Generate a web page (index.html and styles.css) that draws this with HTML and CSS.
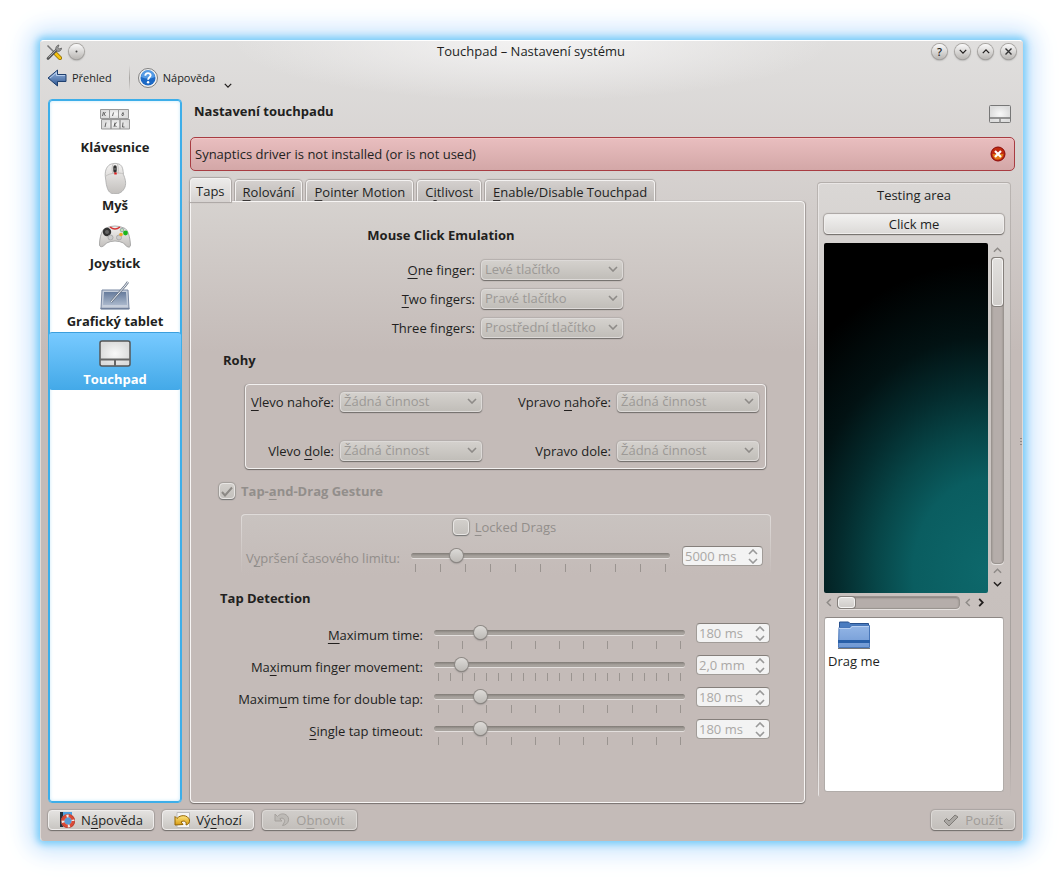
FILE: index.html
```html
<!DOCTYPE html>
<html lang="cs">
<head>
<meta charset="utf-8">
<title>Touchpad – Nastavení systému</title>
<link rel="stylesheet" href="styles.css">
</head>
<body>
<svg class="defs" width="0" height="0" aria-hidden="true">
  <defs>
    <linearGradient id="metal" x1="0" y1="0" x2="0" y2="1"><stop offset="0" stop-color="#f4f3f2"/><stop offset="1" stop-color="#c2bfbc"/></linearGradient>
    <linearGradient id="blue" x1="0" y1="0" x2="0" y2="1"><stop offset="0" stop-color="#9dbbe4"/><stop offset="1" stop-color="#2c548f"/></linearGradient>
    <linearGradient id="folder" x1="0" y1="0" x2="0" y2="1"><stop offset="0" stop-color="#94b6e6"/><stop offset="1" stop-color="#7099d4"/></linearGradient>
    <linearGradient id="slate" x1="0" y1="0" x2="0" y2="1"><stop offset="0" stop-color="#667b9c"/><stop offset="1" stop-color="#a9b7cb"/></linearGradient>
    <linearGradient id="gold" x1="0" y1="0" x2="0" y2="1"><stop offset="0" stop-color="#ffe680"/><stop offset="1" stop-color="#d79a10"/></linearGradient>
    <radialGradient id="pad"><stop offset="0" stop-color="#f8f8f8"/><stop offset="1" stop-color="#dcdcdc"/></radialGradient>
    <symbol id="touchpad" viewBox="0 0 32 28">
      <rect x="1" y="1" width="30" height="25" rx="2" fill="url(#pad)" stroke="#555" stroke-width="1.5"/>
      <path d="M1 19.500h30" stroke="#666" stroke-width="2"/><path d="M16 20v6" stroke="#666" stroke-width="2"/>
    </symbol>
    <symbol id="down" viewBox="0 0 10 6"><path d="M1 1l4 4 4-4" fill="none" stroke="currentColor" stroke-width="1.600"/></symbol>
    <symbol id="up" viewBox="0 0 10 6"><path d="M1 5l4-4 4 4" fill="none" stroke="currentColor" stroke-width="1.600"/></symbol>
    <symbol id="left" viewBox="0 0 6 10"><path d="M5 1L1 5l4 4" fill="none" stroke="currentColor" stroke-width="1.600"/></symbol>
    <symbol id="right" viewBox="0 0 6 10"><path d="M1 1l4 4-4 4" fill="none" stroke="currentColor" stroke-width="2"/></symbol>
  </defs>
</svg>
<div class="window">
  <header class="titlebar">
    <div class="title-side">
      <svg width="16" height="16" viewBox="0 0 16 16"><path d="M1.500 1.500l7 7" stroke="#777" stroke-width="1.500"/><path d="M9 9l5 5" stroke="#8a6a00" stroke-width="4" stroke-linecap="round"/><path d="M9 9l5 5" stroke="#f5c211" stroke-width="2.600" stroke-linecap="round"/><path d="M2 14.500L11 5.500" stroke="#555" stroke-width="2.600" stroke-linecap="round"/><path d="M2.500 13.500L10.500 5.500" stroke="#aaa" stroke-width="1"/><path d="M10 6.500c-1-3 1-5.500 3-5.500l-1 2.500 1.500 1.500 2-1c0 3-3 4.500-5.500 2.500z" fill="#999" stroke="#555" stroke-width=".700"/></svg>
      <button class="round" type="button" aria-label="Nabídka okna"><svg width="15" height="15" viewBox="0 0 15 15"><circle cx="7.500" cy="7.500" r="1" fill="#444"/></svg></button>
    </div>
    <h1 class="title">Touchpad – Nastavení systému</h1>
    <div class="title-side title-end">
      <button class="round" type="button">?</button>
      <button class="round" type="button" aria-label="Minimalizovat"><svg width="8" height="5"><use href="#down"/></svg></button>
      <button class="round" type="button" aria-label="Maximalizovat"><svg width="8" height="5"><use href="#up"/></svg></button>
      <button class="round" type="button" aria-label="Zavřít"><svg width="7" height="7" viewBox="0 0 7 7"><path d="M.5.5l6 6M6.500.5l-6 6" stroke="#333" stroke-width="1.400"/></svg></button>
    </div>
  </header>
  <nav class="toolbar">
    <button class="tool" type="button"><svg width="20" height="18" viewBox="0 0 20 18"><path d="M1 9l9.500-8v4.500H19v7h-8.500V17z" fill="url(#blue)" stroke="#20406f"/><path d="M3 9l6.500-5.500v3H18" fill="none" stroke="#c4d8f2" stroke-width=".8"/></svg>Přehled</button>
    <span class="separator"></span>
    <button class="tool" type="button"><svg width="20" height="20" viewBox="0 0 20 20"><circle cx="10" cy="10" r="9.500" fill="#f0f0f0" stroke="#666" stroke-width=".8"/><circle cx="10" cy="10" r="7.500" fill="#1c69c5"/><path d="M3 9a7 7 0 0114 0q-7 3-14 0" fill="#559be4"/><path d="M7.300 7.800c0-3.600 5.400-3.300 5.400-.5 0 1.900-2.600 2-2.600 4.400" fill="none" stroke="#fff" stroke-width="1.800"/><circle cx="10.100" cy="14.200" r="1.200" fill="#fff"/></svg>Nápověda<svg class="drop" width="8" height="5"><use href="#down"/></svg></button>
  </nav>
  <div class="body">
    <nav class="modules">
      <a class="module" href="#k"><svg width="32" height="32" viewBox="0 0 32 32"><g fill="url(#pad)" stroke="#999"><path d="M1.500 5.500h9v9h-9zM10.500 5.500h9v9h-9zM19.500 5.500h10v9h-10z"/><path d="M2.500 15.500h9.500v9.500H2.500zM12 15.500h9v9.500h-9zM21 15.500h9.500v9.500H21z"/></g><path d="M4.500 8l-1 4m1.500-2l1.500 2M5 10l1.500-2M14.500 8.500l-1 3.500M24 8.500q-2 2-.5 3.500 2-1 .5-3.500M7 18.500L6 23M16 18.500L15 23m.5-2l2 2m-2-2l2-2.500M24 18.500L23.500 23h2" fill="none" stroke="#444" stroke-width=".8"/></svg>Klávesnice</a>
      <a class="module" href="#m"><svg width="32" height="32" viewBox="0 0 32 32"><path d="M11 2.500c3-1.500 7-1.500 10 0 3 2 3 6 3.500 10 1.500 4 3 8 1.500 12.500-2 5-6 7-10 7-5 0-7-3-8-7-1-3-1-6-1.500-9C5.500 10 7 5 11 2.500z" fill="url(#metal)" stroke="#aaa" stroke-width=".800"/><path d="M7 14c4-3 13-4 17.500-2M14 2c-1.500 4-1 7 0 10M18.500 2c1 4 1 7 .5 9.500" fill="none" stroke="#c4c2c0"/><path d="M16 5v4" stroke="#333" stroke-width="3.400" stroke-linecap="round"/><path d="M16 6v2" stroke="#888" stroke-width="1"/><path d="M16.500 10.500v2" stroke="#e02020" stroke-width="2.500"/></svg>Myš</a>
      <a class="module" href="#j"><svg width="32" height="32" viewBox="0 -1 32 32"><path d="M7 7q9-4 18 0c4 1 6 9 6.500 17-.5 4-4 2-7-2q-8.500-4-17 0c-3 4-6.500 5-7 2C.5 16 3 8 7 7z" fill="url(#metal)" stroke="#999" stroke-width=".800"/><path d="M11 6q5 4 10 0" fill="none" stroke="#d43535" stroke-width="1.600"/><circle cx="8" cy="11" r="4.200" fill="#333"/><circle cx="8" cy="11" r="2" fill="#666"/><circle cx="11.500" cy="16.500" r="2.500" fill="#ccc" stroke="#aaa"/><circle cx="20" cy="16.500" r="2.500" fill="#ccc" stroke="#aaa"/><circle cx="23" cy="9" r="1.800" fill="#bfe0b8" stroke="#9aa"/><circle cx="26.500" cy="12" r="2.400" fill="#1bb51b"/><circle cx="22" cy="13.500" r="1.800" fill="#f0a42a"/></svg>Joystick</a>
      <a class="module" href="#t"><svg width="32" height="32" viewBox="0 -2 32 32"><path d="M3 10h26l1 19H2z" fill="#c6cedb" stroke="#7888a3"/><path d="M5 12h22l1 13H4z" fill="url(#slate)"/><path d="M1.500 28.500h29" stroke="#71809b" stroke-width="1.500"/><path d="M12 22L26 6l3-4" fill="none" stroke="#6f7b8d" stroke-width="2.500"/><path d="M12 22L26 6l3-4" fill="none" stroke="#edf1f6"/></svg>Grafický tablet</a>
      <a class="module current" href="#p"><svg width="32" height="32" viewBox="0 -4 32 32"><use href="#touchpad" width="32" height="28"/></svg>Touchpad</a>
    </nav>
    <main class="content">
      <div class="page-head"><h2 class="heading">Nastavení touchpadu</h2><svg width="24" height="20" viewBox="0 0 24 20"><rect x="1.500" y="1.500" width="21" height="17" rx="1" fill="url(#pad)" stroke="#777"/><path d="M1 14h22" stroke="#777" stroke-width="1.500"/><path d="M12 14v5" stroke="#888" stroke-width="1.500"/></svg></div>
      <div class="message" role="alert"><span>Synaptics driver is not installed (or is not used)</span><button class="dismiss" type="button" aria-label="Zavřít zprávu"><svg width="16" height="16" viewBox="0 0 16 16"><circle cx="8" cy="8" r="7" fill="#c02a10" stroke="#8a0808"/><path d="M2.500 8h11q-1 5-5.500 5.500T2.500 8" fill="#e07a18"/><path d="M5 5l6 6M11 5l-6 6" stroke="#fff" stroke-width="2.200"/></svg></button></div>
      <div class="split">
        <section class="settings">
          <div class="tabs" role="tablist">
            <button class="tab active" role="tab" type="button" aria-selected="true">Taps</button>
            <button class="tab" role="tab" type="button"><u>R</u>olování</button>
            <button class="tab" role="tab" type="button"><u>P</u>ointer Motion</button>
            <button class="tab" role="tab" type="button">C<u>i</u>tlivost</button>
            <button class="tab" role="tab" type="button"><u>E</u>nable/Disable Touchpad</button>
          </div>
          <div class="panel" role="tabpanel">
            <h3 class="heading centered">Mouse Click Emulation</h3>
            <div class="fingers">
              <label for="f1"><u>O</u>ne finger:</label><span class="combo"><select id="f1" disabled><option>Levé tlačítko</option></select><svg width="10" height="6"><use href="#down"/></svg></span>
              <label for="f2"><u>T</u>wo fingers:</label><span class="combo"><select id="f2" disabled><option>Pravé tlačítko</option></select><svg width="10" height="6"><use href="#down"/></svg></span>
              <label for="f3">Three fingers:</label><span class="combo"><select id="f3" disabled><option>Prostřední tlačítko</option></select><svg width="10" height="6"><use href="#down"/></svg></span>
            </div>
            <h3 class="heading corners-title">Rohy</h3>
            <div class="corners">
              <label for="c1"><u>V</u>levo nahoře:</label><span class="combo"><select id="c1" disabled><option>Žádná činnost</option></select><svg width="10" height="6"><use href="#down"/></svg></span>
              <label for="c2">Vpravo <u>n</u>ahoře:</label><span class="combo"><select id="c2" disabled><option>Žádná činnost</option></select><svg width="10" height="6"><use href="#down"/></svg></span>
              <label for="c3">Vlevo <u>d</u>ole:</label><span class="combo"><select id="c3" disabled><option>Žádná činnost</option></select><svg width="10" height="6"><use href="#down"/></svg></span>
              <label for="c4">Vpravo dole:</label><span class="combo"><select id="c4" disabled><option>Žádná činnost</option></select><svg width="10" height="6"><use href="#down"/></svg></span>
            </div>
            <label class="check strong"><span class="tick"><input type="checkbox" checked disabled><svg width="12" height="11" viewBox="0 0 12 11"><path d="M1 6l3 3.500L11 1.500" fill="none" stroke="#8c8985" stroke-width="2"/></svg></span><span>Tap-<u>a</u>nd-Drag Gesture</span></label>
            <div class="drag">
              <label class="check"><span class="tick"><input type="checkbox" disabled></span><span><u>L</u>ocked Drags</span></label>
              <div class="drag-row">
                <label for="s0">V<u>y</u>pršení časového limitu:</label>
                <span class="slider"><input id="s0" type="range" value="16" disabled><span class="ticks"><i></i><i></i><i></i><i></i><i></i><i></i><i></i><i></i><i></i><i></i><i></i></span></span>
                <span class="spin"><input type="text" value="5000 ms" aria-label="Časový limit" disabled><span class="arrows"><button type="button" aria-label="Více" disabled><svg width="10" height="6"><use href="#up"/></svg></button><button type="button" aria-label="Méně" disabled><svg width="10" height="6"><use href="#down"/></svg></button></span></span>
              </div>
            </div>
            <h3 class="heading detection-title">Tap Detection</h3>
            <div class="detection">
              <label for="s1"><u>M</u>aximum time:</label>
              <span class="slider"><input id="s1" type="range" value="17" disabled><span class="ticks"><i></i><i></i><i></i><i></i><i></i><i></i><i></i><i></i><i></i><i></i><i></i></span></span>
              <span class="spin"><input type="text" value="180 ms" aria-label="Maximum time" disabled><span class="arrows"><button type="button" aria-label="Více" disabled><svg width="10" height="6"><use href="#up"/></svg></button><button type="button" aria-label="Méně" disabled><svg width="10" height="6"><use href="#down"/></svg></button></span></span>
              <label for="s2">Ma<u>x</u>imum finger movement:</label>
              <span class="slider"><input id="s2" type="range" value="9" disabled><span class="ticks"><i></i><i></i><i></i><i></i><i></i><i></i><i></i><i></i><i></i><i></i><i></i><i></i><i></i><i></i><i></i><i></i><i></i><i></i><i></i><i></i><i></i></span></span>
              <span class="spin"><input type="text" value="2,0 mm" aria-label="Maximum finger movement" disabled><span class="arrows"><button type="button" aria-label="Více" disabled><svg width="10" height="6"><use href="#up"/></svg></button><button type="button" aria-label="Méně" disabled><svg width="10" height="6"><use href="#down"/></svg></button></span></span>
              <label for="s3">Maxim<u>u</u>m time for double tap:</label>
              <span class="slider"><input id="s3" type="range" value="17" disabled><span class="ticks"><i></i><i></i><i></i><i></i><i></i><i></i><i></i><i></i><i></i><i></i><i></i></span></span>
              <span class="spin"><input type="text" value="180 ms" aria-label="Maximum time for double tap" disabled><span class="arrows"><button type="button" aria-label="Více" disabled><svg width="10" height="6"><use href="#up"/></svg></button><button type="button" aria-label="Méně" disabled><svg width="10" height="6"><use href="#down"/></svg></button></span></span>
              <label for="s4"><u>S</u>ingle tap timeout:</label>
              <span class="slider"><input id="s4" type="range" value="17" disabled><span class="ticks"><i></i><i></i><i></i><i></i><i></i><i></i><i></i><i></i><i></i><i></i><i></i></span></span>
              <span class="spin"><input type="text" value="180 ms" aria-label="Single tap timeout" disabled><span class="arrows"><button type="button" aria-label="Více" disabled><svg width="10" height="6"><use href="#up"/></svg></button><button type="button" aria-label="Méně" disabled><svg width="10" height="6"><use href="#down"/></svg></button></span></span>
            </div>
          </div>
        </section>
        <aside class="testing">
          <div class="testing-title">Testing area</div>
          <button class="button click" type="button">Click me</button>
          <div class="scroll">
            <div class="canvas"></div>
            <div class="vbar">
              <svg class="dim" width="9" height="6"><use href="#up"/></svg>
              <div class="groove"><div class="thumb"></div></div>
              <svg class="dim" width="9" height="6"><use href="#up"/></svg>
              <svg width="9" height="6"><use href="#down"/></svg>
            </div>
            <div class="hbar">
              <svg class="dim" width="6" height="9"><use href="#left"/></svg>
              <div class="groove"><div class="thumb"></div></div>
              <svg class="dim" width="6" height="9"><use href="#left"/></svg>
              <svg width="6" height="9"><use href="#right"/></svg>
            </div>
          </div>
          <div class="files">
            <div class="file"><svg width="32" height="28" viewBox="0 0 32 28"><path d="M1.500 1h9l1.500 1.500h18.500V9h-29z" fill="#4a7cc0" stroke="#28508c"/><path d="M1 6.500h11l1.500-2H31.500V26.500H.5z" fill="url(#folder)" stroke="#4876b8"/><path d="M0 20.500h32" stroke="#285fa8" stroke-width="3"/><path d="M1 7.500h11.500l1.500-2h17" fill="none" stroke="#b8d0f2"/><path d="M0 27.500h32" stroke="#777"/></svg><span>Drag me</span></div>
          </div>
        </aside>
      </div>
    </main>
    <span class="grip" aria-hidden="true"><i></i><i></i><i></i></span>
  </div>
  <footer class="footer">
    <button class="button help" type="button"><svg width="16" height="16" viewBox="0 0 16 16"><rect x="1" y="0" width="12" height="15" fill="#4d9fe0"/><path d="M1 0h3v15H1z" fill="#26303c"/><circle cx="9" cy="9" r="5.300" fill="#5a9bd5" stroke="#f4e8e4" stroke-width="3.200"/><circle cx="9" cy="9" r="5.300" fill="none" stroke="#dc4a36" stroke-width="3.200" stroke-dasharray="6.100 2.225"/><circle cx="9" cy="9" r="6.800" fill="none" stroke="#9c3328" stroke-width=".600"/></svg><span>N<u>á</u>pověda</span></button>
    <button class="button defaults" type="button"><svg width="16" height="16" viewBox="0 0 16 16"><path d="M3 .5h12.500v15H3z" fill="#f4f4f4" stroke="#bbb"/><path d="M1 4.500l2 2c3-4 11-4 12.500 1.500.3 2.500-1 4.500-3.500 5 1-3.500-2-5-5-3l2 2.500-8 .500z" fill="url(#gold)" stroke="#946400"/></svg><span>Vý<u>c</u>hozí</span></button>
    <button class="button revert" type="button" disabled><svg width="16" height="16" viewBox="0 0 16 16"><path d="M1 2v7h7L5.800 6.800c3-2 6.200.700 4.200 4.200L8.500 13.500c6.500-.5 8-8 3.500-10.700-3-1.800-6.500-.800-8.500 1.700z" fill="#bdbab6" stroke="#a5a19d"/></svg><span>O<u>b</u>novit</span></button>
    <button class="button apply" type="button" disabled><svg width="16" height="13" viewBox="0 0 16 13"><path d="M1 7l2.500-2.500L6 7l6-6 3 2-9 9z" fill="#aaa7a3" stroke="#7f7c78"/></svg><span>Použí<u>t</u></span></button>
  </footer>
</div>
</body>
</html>
```

FILE: styles.css
```css
* { box-sizing: border-box; }
body { margin: 0; padding: 40px 40px 41px; min-height: 100vh; display: flex; background: #fff; color: #221f1e; font: 13px/20px "Open Sans", "Noto Sans", sans-serif; }
.defs { position: absolute; }
svg { flex: none; display: block; }
button, input, select { font: inherit; color: inherit; margin: 0; }
button { border: 0; padding: 0; background: none; }
u { text-decoration: underline 1px; text-underline-offset: 3px; text-decoration-skip-ink: none; }
.window { flex: 1; display: flex; flex-direction: column; border-radius: 4px; border: 1px solid #dedad8; border-top-color: #fff; border-bottom-color: #c4bbb8; background: radial-gradient(ellipse 300px 60px at 50% 0, #f3f2f2, transparent), linear-gradient(#e0dfde, #d6d2d0 130px, #c4bbb8 310px); box-shadow: 0 0 7px 3px #79cdf9, 0 0 22px 8px #c4e1fc, 0 0 34px 10px #eef6fe; }
.titlebar { display: grid; grid-template-columns: 1fr auto 1fr; align-items: center; height: 21px; padding: 0 6px 0 5px; }
.title { margin: 0; font-size: 13px; font-weight: 400; line-height: 18px; padding-bottom: 2px; white-space: nowrap; }
.title-side { display: flex; align-items: center; gap: 7px; }
.title-end { justify-content: flex-end; gap: 8px; }
.round { width: 15px; height: 15px; border-radius: 50%; display: grid; place-items: center; background: linear-gradient(#fafafa, #bab7b4); box-shadow: 0 0 0 1px #a9a6a3, 0 1px 2px #666; font-size: 11px; font-weight: 600; line-height: 15px; }
.toolbar { display: flex; align-items: center; gap: 8px; height: 32px; padding: 0 6px; font-size: 11px; }
.tool { display: flex; align-items: center; gap: 5px; }
.drop { margin: 14px 0 0 4px; }
.separator { width: 1px; height: 26px; margin: 0 0 0 9px; background: linear-gradient(transparent, #a8a5a2, transparent); }
.body { flex: 1; display: grid; grid-template-columns: 134px minmax(0, 1fr) 8px; column-gap: 8px; padding: 5px 0 6px 7px; }
.modules { display: flex; flex-direction: column; border: 1px solid #3daee9; border-radius: 4px; background: #fff; box-shadow: inset 0 0 0 1px #3daee9, inset 0 0 4px #a9dcf8; }
.module { display: flex; flex-direction: column; align-items: center; height: 58px; padding-top: 4px; color: #221f1e; font-weight: 700; line-height: 18px; text-decoration: none; }
.module svg { margin-bottom: 2px; }
.current { padding-top: 3px; color: #fff; background: linear-gradient(#78caff, #43a9e8); border-top: 1px solid #3b9fdd; border-radius: 3px; }
.content { display: flex; flex-direction: column; min-width: 0; margin-right: -9px; }
.heading { margin: 0; font-size: 13px; font-weight: 700; line-height: 20px; }
.page-head { display: flex; justify-content: space-between; padding: 2px 3px 0 4px; height: 38px; }
.page-head svg { margin-top: 3px; }
.message { display: flex; align-items: center; justify-content: space-between; height: 34px; padding: 0 8px 0 4px; border: 1px solid #a83c42; border-radius: 5px; background: linear-gradient(#e9bebf, #d3a7a7); box-shadow: inset 0 1px #f1c8c8; }
.split { flex: 1; display: grid; grid-template-columns: minmax(0, 1fr) 194px; gap: 12px; padding-right: 4px; }
.settings { display: flex; flex-direction: column; padding-top: 7px; }
.tabs { display: flex; align-items: flex-end; gap: 4px; height: 23px; }
.tab { height: 21px; padding: 0 7px; border: 1px solid #f4f2f1; border-bottom: 0; border-radius: 4px 4px 0 0; background: linear-gradient(#d4d0ce, #bdb9b6); box-shadow: 0 0 1px 1px #aaa5a2; white-space: nowrap; line-height: 22px; }
.active { height: 24px; padding: 0 5px; background: linear-gradient(#ecebea, #d6d2d0); z-index: 1; position: relative; margin-bottom: -1px; line-height: 24px; }
.panel { flex: 1; padding: 23px 33px 20px 28px; border: 1px solid #f7f5f4; border-radius: 0 4px 4px 4px; background: linear-gradient(#d6d2cf, #c4bbb8 150px); box-shadow: 0 1px 1px #77716e, 1px 0 1px #a7a19e, -1px 0 1px #a7a19e; }
.centered { text-align: center; margin-right: 108px; }
.fingers { display: grid; grid-template-columns: 256px 142px; column-gap: 6px; row-gap: 7px; margin-top: 14px; }
.fingers label, .corners label, .detection label { text-align: right; line-height: 22px; height: 22px; white-space: nowrap; }
.combo { position: relative; display: block; height: 22px; }
.combo select { width: 100%; height: 20px; padding: 0 3px 2px; appearance: none; border: 1px solid #dddad8; border-radius: 4px; background: linear-gradient(#d4d1cd, #c1beb9); box-shadow: 0 1px 1px #716d6a, 0 0 1px 1px #b4afac; color: #9c9996; opacity: 1; line-height: 16px; }
.combo svg { position: absolute; right: 5px; top: 7px; color: #8e8b88; }
.corners-title { margin: 11px 0 0 4px; }
.corners { display: grid; grid-template-columns: 87px 142px 123px 142px; column-gap: 6px; row-gap: 27px; margin: 14px 5px 0 26px; padding: 6px 5px 6px 1px; border: 1px solid #f2f0ef; border-radius: 4px; box-shadow: 0 1px 1px #6f6a67, 1px 0 1px #a39d9a, -1px 0 1px #a39d9a; }
.check { display: flex; align-items: center; gap: 6px; color: #928e8b; }
.strong { font-weight: 700; margin-top: 13px; line-height: 18px; }
.tick { position: relative; display: block; height: 16px; }
.tick input { display: block; width: 16px; height: 16px; appearance: none; border: 1px solid #e8e6e4; border-radius: 4px; background: linear-gradient(#d2cfcb, #c4c1bd); box-shadow: 0 1px 1px #777, 0 0 1px 1px #a39f9b; }
.tick svg { position: absolute; left: 2px; top: 3px; }
.drag { margin: 14px 0 0 22px; height: 62px; padding: 2px 7px 0 4px; border: 1px solid transparent; border-top-color: #dfdbd9; border-radius: 4px; background: linear-gradient(#c9c3c0, #c4bbb8) padding-box, linear-gradient(#dfdbd9, #c4bbb8) border-box; box-shadow: 0 -1px 1px -1px #a09a96; color: #928e8b; }
.drag .check { justify-content: center; }
.drag-row { display: grid; grid-template-columns: 153px minmax(0, 1fr) 81px; column-gap: 12px; margin-top: 9px; }
.drag-row label { white-space: nowrap; line-height: 24px; height: 20px; }
.slider { display: block; height: 26px; }
.slider input { display: block; width: 100%; height: 18px; appearance: none; background: none; }
.slider input::-webkit-slider-runnable-track { height: 5px; border-radius: 3px; background: linear-gradient(#807b76, #a8a39e 60%); box-shadow: 0 1px #e3dfdd; }
.slider input::-webkit-slider-thumb { appearance: none; width: 13px; height: 13px; margin-top: -4px; border-radius: 50%; background: linear-gradient(#dcdad7, #bdbab6); box-shadow: 0 0 0 1px #8d8985, 0 1px 2px #555; }
.ticks { display: flex; justify-content: space-between; padding: 0 4px; height: 8px; }
.ticks i { width: 1px; background: #9a9490; }
.spin { display: flex; height: 20px; border: 1px solid #a19c98; border-top-color: #857f7b; border-radius: 4px; background: #f3f3f3; }
.spin input { flex: 1; min-width: 0; height: 18px; border: 0; padding: 0 2px; background: none; color: #aaa8a6; line-height: 18px; }
.arrows { display: flex; flex-direction: column; justify-content: center; gap: 3px; padding-right: 4px; color: #999; }
.arrows button { display: block; height: 6px; }
.detection-title { margin: 12px 0 0 1px; }
.detection { display: grid; grid-template-columns: 204px minmax(0, 1fr) 74px; column-gap: 11px; row-gap: 12px; margin: 15px 1px 0 0; }
.detection label { height: 20px; line-height: 24px; }
.detection .slider { height: 20px; }
.testing { margin-top: 11px; margin-bottom: 5px; display: flex; flex-direction: column; padding: 3px 6px 5px; border-radius: 4px; border: 1px solid transparent; border-top-color: #b4afac; background: linear-gradient(#dad7d5, #ccc7c4 200px, #c4bbb8) padding-box, linear-gradient(#b9b4b1, #a39d9a 90%, #c4bbb8) border-box; box-shadow: inset 1px 1px #e9e6e5; }
.testing-title { text-align: center; height: 28px; line-height: 19px; }
.button { display: flex; align-items: center; justify-content: center; gap: 6px; height: 20px; border: 1px solid #efedec; border-radius: 4px; background: linear-gradient(#e4e2e0, #c9c6c2); box-shadow: 0 1px 1px #736f6c, 0 0 1px 1px #aaa5a2; white-space: nowrap; }
.click { background: linear-gradient(#f1f0ef, #dcdad8); }
.scroll { flex: 1; display: grid; grid-template-columns: minmax(0, 1fr) 13px; grid-template-rows: minmax(0, 1fr) 13px; gap: 3px; margin: 9px 0 8px; }
.canvas { border-radius: 2px; background: radial-gradient(ellipse 250px 310px at 100% 94%, #0d686b, #0a5d60 30%, #074648 45%, #042b2d 60%, #021213 76%, #000); }
.vbar { display: flex; flex-direction: column; align-items: center; gap: 4px; padding: 4px 0 6px; }
.vbar svg:last-child { margin-top: 3px; }
.hbar { display: flex; align-items: center; gap: 5px; padding: 0 4px 0 2px; }
.hbar svg:last-child { margin-left: 2px; }
.dim { color: #8e8a87; }
.groove { flex: 1; border: 1px solid #9a9490; border-radius: 4px; background: #b5adaa; box-shadow: 0 1px #e5e1df, inset 0 1px 2px #86807c; }
.vbar .groove { width: 13px; }
.hbar .groove { height: 13px; }
.thumb { border: 1px solid #f5f4f3; border-radius: 3px; background: linear-gradient(#e2e0de, #d0cdca); box-shadow: 0 0 0 1px #85807c; }
.vbar .thumb { height: 48px; }
.hbar .thumb { width: 17px; height: 11px; }
.files { height: 175px; padding: 3px; border: 1px solid #b1aca9; border-top-color: #8d8784; border-radius: 3px; background: #fff; }
.file { display: inline-flex; flex-direction: column; align-items: center; gap: 2px; }
.dismiss { display: block; }
.grip { align-self: center; display: grid; gap: 2px; justify-content: end; margin-bottom: 20px; pointer-events: none; }
.grip i { width: 2px; height: 1px; background: #8f8986; }
.footer { display: flex; gap: 8px; height: 31px; padding: 1px 7px 0; }
.help { width: 106px; }
.defaults { width: 92px; }
.revert { width: 95px; }
.apply { width: 84px; margin-left: auto; }
.button:disabled { color: #a09c98; background: linear-gradient(#d0cdca, #c3bfbb); border-color: #dcd9d6; }
```
